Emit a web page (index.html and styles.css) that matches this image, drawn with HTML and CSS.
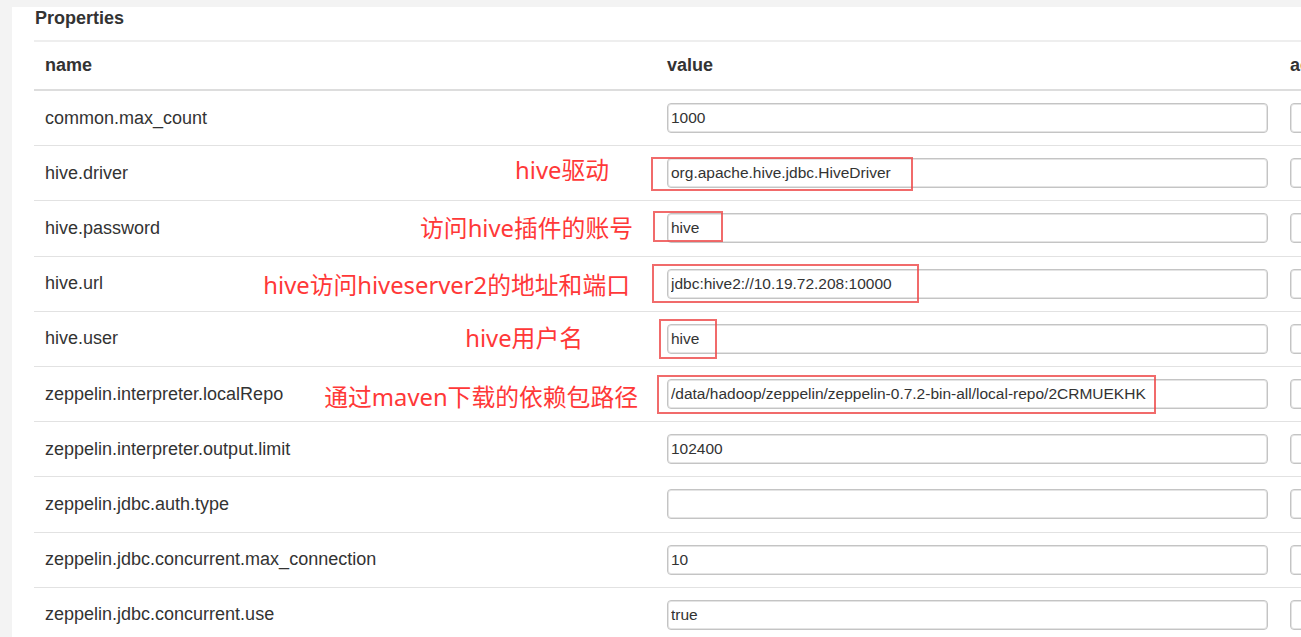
FILE: index.html
```html
<!DOCTYPE html>
<html lang="zh-CN">
<head>
<meta charset="utf-8">
<title>Properties</title>
<link rel="stylesheet" href="styles.css">
</head>
<body>
<div class="panel">
  <div class="section">
    <div class="section-title">Properties</div>
    <table class="props">
      <colgroup>
        <col class="col-name">
        <col class="col-value">
        <col class="col-action">
      </colgroup>
      <thead>
        <tr>
          <th class="th-name">name</th>
          <th class="th-value">value</th>
          <th class="th-action">action</th>
        </tr>
      </thead>
      <tbody>
        <tr>
          <td class="name">common.max_count</td>
          <td class="value"><input class="field" type="text" value="1000"></td>
          <td class="action"><span class="btn"></span></td>
        </tr>
        <tr>
          <td class="name">hive.driver</td>
          <td class="value">
            <span class="note note-1">hive驱动</span>
            <span class="mark mark-1"></span>
            <input class="field" type="text" value="org.apache.hive.jdbc.HiveDriver">
          </td>
          <td class="action"><span class="btn"></span></td>
        </tr>
        <tr>
          <td class="name">hive.password</td>
          <td class="value">
            <span class="note note-2">访问hive插件的账号</span>
            <span class="mark mark-2"></span>
            <input class="field" type="text" value="hive">
          </td>
          <td class="action"><span class="btn"></span></td>
        </tr>
        <tr>
          <td class="name">hive.url</td>
          <td class="value">
            <span class="note note-3">hive访问hiveserver2的地址和端口</span>
            <span class="mark mark-3"></span>
            <input class="field" type="text" value="jdbc:hive2://10.19.72.208:10000">
          </td>
          <td class="action"><span class="btn"></span></td>
        </tr>
        <tr>
          <td class="name">hive.user</td>
          <td class="value">
            <span class="note note-4">hive用户名</span>
            <span class="mark mark-4"></span>
            <input class="field" type="text" value="hive">
          </td>
          <td class="action"><span class="btn"></span></td>
        </tr>
        <tr>
          <td class="name">zeppelin.interpreter.localRepo</td>
          <td class="value">
            <span class="note note-5">通过maven下载的依赖包路径</span>
            <span class="mark mark-5"></span>
            <input class="field" type="text" value="/data/hadoop/zeppelin/zeppelin-0.7.2-bin-all/local-repo/2CRMUEKHK">
          </td>
          <td class="action"><span class="btn"></span></td>
        </tr>
        <tr>
          <td class="name">zeppelin.interpreter.output.limit</td>
          <td class="value"><input class="field" type="text" value="102400"></td>
          <td class="action"><span class="btn"></span></td>
        </tr>
        <tr>
          <td class="name">zeppelin.jdbc.auth.type</td>
          <td class="value"><input class="field" type="text" value=""></td>
          <td class="action"><span class="btn"></span></td>
        </tr>
        <tr>
          <td class="name">zeppelin.jdbc.concurrent.max_connection</td>
          <td class="value"><input class="field" type="text" value="10"></td>
          <td class="action"><span class="btn"></span></td>
        </tr>
        <tr>
          <td class="name">zeppelin.jdbc.concurrent.use</td>
          <td class="value"><input class="field" type="text" value="true"></td>
          <td class="action"><span class="btn"></span></td>
        </tr>
      </tbody>
    </table>
  </div>
</div>
</body>
</html>
```

FILE: styles.css
```css
html, body {
  margin: 0;
  padding: 0;
  overflow: hidden;
}

body {
  background: #f3f3f3;
  font-family: "Liberation Sans", Arial, sans-serif;
  color: #333;
  width: 1301px;
  height: 637px;
}

.panel {
  margin: 7px 0 0 12px;
  background: #fff;
  width: 1500px;
  height: 700px;
  padding-left: 22px;
  box-sizing: border-box;
}

.section-title {
  height: 33px;
  line-height: 22px;
  font-size: 18px;
  font-weight: bold;
  padding-left: 1px;
  border-bottom: 2px solid #eee;
}

.props {
  border-collapse: separate;
  border-spacing: 0;
  table-layout: fixed;
  width: 1395px;
  font-size: 18px;
}

.col-name { width: 622px; }
.col-value { width: 623px; }
.col-action { width: 150px; }

.props th {
  box-sizing: border-box;
  height: 49px;
  text-align: left;
  font-weight: bold;
  padding: 0 11px;
  border-bottom: 2px solid #ddd;
  vertical-align: middle;
}

.props th.th-value { padding-left: 11px; }

.props td {
  box-sizing: border-box;
  height: 55.2px;
  padding: 0 11px;
  border-bottom: 1px solid #e2e2e2;
  vertical-align: middle;
}

.props td.value {
  position: relative;
}

.field {
  display: block;
  box-sizing: border-box;
  width: 601px;
  height: 30px;
  margin: 0;
  padding: 0 3px;
  border: 1px solid #c4c4c4;
  border-radius: 4px;
  box-shadow: inset 0 0 0 1px #e4e4e4;
  background: #fff;
  font-family: "Liberation Sans", Arial, sans-serif;
  font-size: 15.5px;
  color: #333;
  outline: none;
}

.btn {
  display: block;
  box-sizing: border-box;
  width: 60px;
  height: 30px;
  border: 1px solid #c4c4c4;
  border-radius: 4px;
  box-shadow: inset 0 0 0 1px #e4e4e4;
  background: #fff;
}

/* annotation overlays */
.note {
  position: absolute;
  top: 50%;
  transform: translateY(-50%);
  white-space: nowrap;
  font-family: "Noto Sans", "Noto Sans CJK SC", sans-serif;
  font-size: 23.8px;
  line-height: 30px;
  color: #ff3838;
}

.note-1 { right: calc(100% + 47px); margin-top: -3px; }
.note-2 { right: calc(100% + 23px); margin-top: 0; }
.note-3 { right: calc(100% + 26px); margin-top: 1px; }
.note-4 { right: calc(100% + 73px); margin-top: -1px; }
.note-5 { right: calc(100% + 18px); margin-top: 3px; }

.mark {
  position: absolute;
  box-sizing: border-box;
  border: 2px solid rgba(238, 70, 70, 0.8);
  pointer-events: none;
  z-index: 2;
}

.mark-1 { left: -5px; top: 11px; width: 262px; height: 34px; }
.mark-2 { left: -3px; top: 10px; width: 70px; height: 31px; }
.mark-3 { left: -4px; top: 7px; width: 267px; height: 39px; }
.mark-4 { left: 3px; top: 7px; width: 58px; height: 40px; }
.mark-5 { left: 1px; top: 8px; width: 499px; height: 39px; }
```
